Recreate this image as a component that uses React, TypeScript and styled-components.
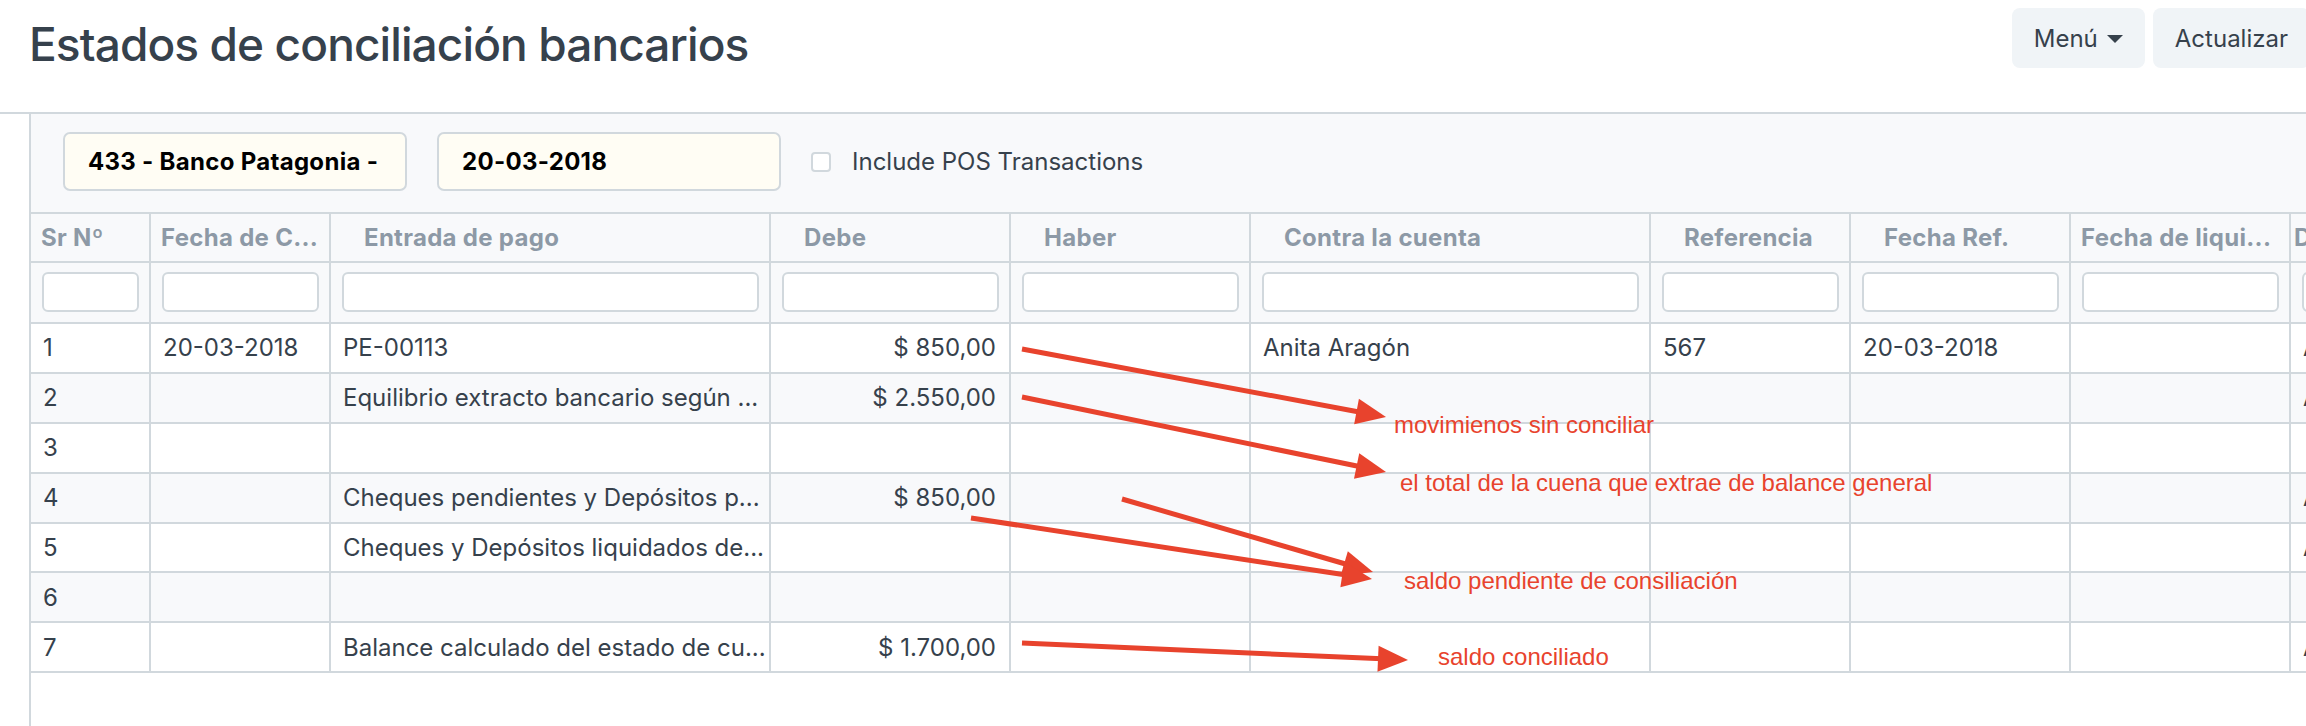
import styled, { createGlobalStyle } from 'styled-components';

const GlobalStyle = createGlobalStyle`
  html, body {
    margin: 0;
    padding: 0;
    background: #fff;
    overflow: hidden;
  }
  body {
    font-family: Inter, "Noto Sans", sans-serif;
    color: #36414c;
  }
  * { box-sizing: border-box; }
`;

const RED = '#e8432d';
const BORDER = '#d1d8dd';

const columns = [
  { label: 'Sr Nº', width: 120, indent: 10 },
  { label: 'Fecha de C...', width: 180, indent: 10 },
  { label: 'Entrada de pago', width: 440, indent: 33 },
  { label: 'Debe', width: 240, indent: 33, right: true },
  { label: 'Haber', width: 240, indent: 33, right: true },
  { label: 'Contra la cuenta', width: 400, indent: 33 },
  { label: 'Referencia', width: 200, indent: 33 },
  { label: 'Fecha Ref.', width: 220, indent: 33 },
  { label: 'Fecha de liqui...', width: 220, indent: 10 },
  { label: 'Documento', width: 220, indent: 3 },
];

const template = columns.map((c) => `${c.width}px`).join(' ');

const rows = [
  ['1', '20-03-2018', 'PE-00113', '$ 850,00', '', 'Anita Aragón', '567', '20-03-2018', '', 'Abierto'],
  ['2', '', 'Equilibrio extracto bancario según ...', '$ 2.550,00', '', '', '', '', '', 'Abierto'],
  ['3', '', '', '', '', '', '', '', '', ''],
  ['4', '', 'Cheques pendientes y Depósitos p...', '$ 850,00', '', '', '', '', '', 'Abierto'],
  ['5', '', 'Cheques y Depósitos liquidados de...', '', '', '', '', '', '', 'Abierto'],
  ['6', '', '', '', '', '', '', '', '', ''],
  ['7', '', 'Balance calculado del estado de cu...', '$ 1.700,00', '', '', '', '', '', 'Abierto'],
];

// notas rojas dibujadas encima de la tabla
const arrows = [
  [1022, 349, 1386, 417],
  [1022, 397, 1386, 472],
  [1122, 499, 1373, 572],
  [971, 518, 1372, 579],
  [1022, 643, 1408, 660],
];

const notes = [
  { x: 1394, y: 413, text: 'movimienos sin conciliar' },
  { x: 1400, y: 471, text: 'el total de la cuena que extrae de balance general' },
  { x: 1404, y: 569, text: 'saldo pendiente de consiliación' },
  { x: 1438, y: 645, text: 'saldo conciliado' },
];

const arrowShape = (x1: number, y1: number, x2: number, y2: number) => {
  const dx = x2 - x1;
  const dy = y2 - y1;
  const len = Math.hypot(dx, dy);
  const ux = dx / len;
  const uy = dy / len;
  const hl = 30;
  const hw = 13;
  const bx = x2 - ux * hl;
  const by = y2 - uy * hl;
  return {
    end: [bx + ux * 4, by + uy * 4],
    points: `${x2},${y2} ${bx - uy * hw},${by + ux * hw} ${bx + uy * hw},${by - ux * hw}`,
  };
};

const App = () => {
  return (
    <Page>
      <GlobalStyle />
      <PageHead>
        <Title>Estados de conciliación bancarios</Title>
        <Actions>
          <HeadButton>
            Menú <Caret />
          </HeadButton>
          <HeadButton>Actualizar</HeadButton>
        </Actions>
      </PageHead>

      <Body>
        <Gutter />
        <Main>
          <FilterBar>
            <BoldInput readOnly value='433 - Banco Patagonia - Cuenta Corriente' />
            <BoldInput readOnly value='20-03-2018' />
            <CheckLabel>
              <CheckBox />
              Include POS Transactions
            </CheckLabel>
          </FilterBar>

          <Row $tone='head'>
            {columns.map((c) => (
              <HeadCell key={c.label} $indent={c.indent}>
                {c.label}
              </HeadCell>
            ))}
          </Row>
          <Row $tone='filter'>
            {columns.map((c) => (
              <FilterCell key={c.label}>
                <FilterInput />
              </FilterCell>
            ))}
          </Row>
          {rows.map((r, i) => (
            <Row key={i} $tone={i % 2 === 0 ? 'odd' : 'even'}>
              {r.map((v, j) => (
                <DataCell key={j} $right={!!columns[j].right}>
                  {v}
                </DataCell>
              ))}
            </Row>
          ))}
        </Main>
      </Body>

      <Overlay width='2306' height='726' viewBox='0 0 2306 726'>
        {arrows.map(([x1, y1, x2, y2], i) => {
          const a = arrowShape(x1, y1, x2, y2);
          return (
            <g key={i}>
              <line x1={x1} y1={y1} x2={a.end[0]} y2={a.end[1]} stroke={RED} strokeWidth='5' />
              <polygon points={a.points} fill={RED} />
            </g>
          );
        })}
      </Overlay>
      {notes.map((n) => (
        <Note key={n.text} $x={n.x} $y={n.y}>
          {n.text}
        </Note>
      ))}
    </Page>
  );
};

export default App;

const Page = styled.div`
  position: relative;
  width: 2306px;
  height: 726px;
  overflow: hidden;
  background: #fff;
`;

const PageHead = styled.div`
  height: 114px;
  display: flex;
  justify-content: space-between;
  align-items: flex-start;
  padding-left: 29px;
  border-bottom: 2px solid ${BORDER};
`;

const Title = styled.h1`
  margin: 21px 0 0;
  font-size: 46px;
  line-height: 46px;
  font-weight: 500;
  color: #36414c;
  letter-spacing: -0.9px;
  white-space: nowrap;
`;

const Actions = styled.div`
  display: flex;
  gap: 8px;
  padding-top: 8px;
  margin-right: -4px;
`;

const HeadButton = styled.button`
  height: 60px;
  padding: 0 22px;
  display: flex;
  align-items: center;
  gap: 9px;
  border: none;
  border-radius: 8px;
  background: #f0f4f7;
  color: #36414c;
  font-family: inherit;
  font-size: 24px;
  white-space: nowrap;
`;

const Caret = styled.span`
  width: 0;
  height: 0;
  border-left: 8px solid transparent;
  border-right: 8px solid transparent;
  border-top: 8px solid #36414c;
  margin-top: 2px;
`;

const Body = styled.div`
  display: flex;
  height: 612px;
`;

const Gutter = styled.div`
  width: 29px;
  flex: none;
`;

const Main = styled.div`
  flex: 1;
  min-width: 0;
  border-left: 2px solid ${BORDER};
  background: #fff;
`;

const FilterBar = styled.div`
  height: 100px;
  display: flex;
  align-items: flex-start;
  gap: 30px;
  padding: 18px 0 0 32px;
  background: #f8f9fb;
  border-bottom: 2px solid ${BORDER};
`;

const BoldInput = styled.input`
  width: 344px;
  height: 59px;
  padding: 0 23px;
  border: 2px solid ${BORDER};
  border-radius: 7px;
  background: #fffdf4;
  color: #000;
  font-family: inherit;
  font-size: 24px;
  letter-spacing: 0.3px;
  font-weight: 700;
  outline: none;
`;

const CheckLabel = styled.label`
  height: 59px;
  display: flex;
  align-items: center;
  gap: 21px;
  font-size: 24px;
  color: #36414c;
  white-space: nowrap;
`;

const CheckBox = styled.span`
  flex: none;
  width: 20px;
  height: 20px;
  border: 2px solid ${BORDER};
  border-radius: 4px;
  background: #fff;
`;

const Row = styled.div<{ $tone: 'head' | 'filter' | 'odd' | 'even' }>`
  display: grid;
  grid-template-columns: ${template};
  height: ${(p) => (p.$tone === 'head' ? 49 : p.$tone === 'filter' ? 61 : 49.9)}px;
  border-bottom: 2px solid ${BORDER};
  background: ${(p) => (p.$tone === 'odd' ? '#fff' : '#f8f9fb')};
`;

const HeadCell = styled.div<{ $indent: number }>`
  display: flex;
  align-items: center;
  padding-left: ${(p) => p.$indent}px;
  border-right: 2px solid ${BORDER};
  color: #8d99a6;
  font-size: 24px;
  letter-spacing: 0.3px;
  font-weight: 700;
  white-space: nowrap;
  overflow: hidden;
`;

const FilterCell = styled.div`
  display: flex;
  align-items: center;
  padding: 0 10px 1px 11px;
  border-right: 2px solid ${BORDER};
`;

const FilterInput = styled.input`
  width: 100%;
  height: 40px;
  border: 2px solid ${BORDER};
  border-radius: 6px;
  background: #fff;
  outline: none;
`;

const DataCell = styled.div<{ $right: boolean }>`
  display: flex;
  align-items: center;
  justify-content: ${(p) => (p.$right ? 'flex-end' : 'flex-start')};
  padding: 0 13px 0 12px;
  border-right: 2px solid ${BORDER};
  font-size: 24px;
  color: #36414c;
  white-space: nowrap;
  overflow: hidden;
`;

const Overlay = styled.svg`
  position: absolute;
  top: 0;
  left: 0;
  pointer-events: none;
`;

const Note = styled.span<{ $x: number; $y: number }>`
  position: absolute;
  left: ${(p) => p.$x}px;
  top: ${(p) => p.$y}px;
  font-family: "Liberation Sans", Arial, sans-serif;
  font-size: 24px;
  line-height: 24px;
  color: ${RED};
  white-space: nowrap;
`;
